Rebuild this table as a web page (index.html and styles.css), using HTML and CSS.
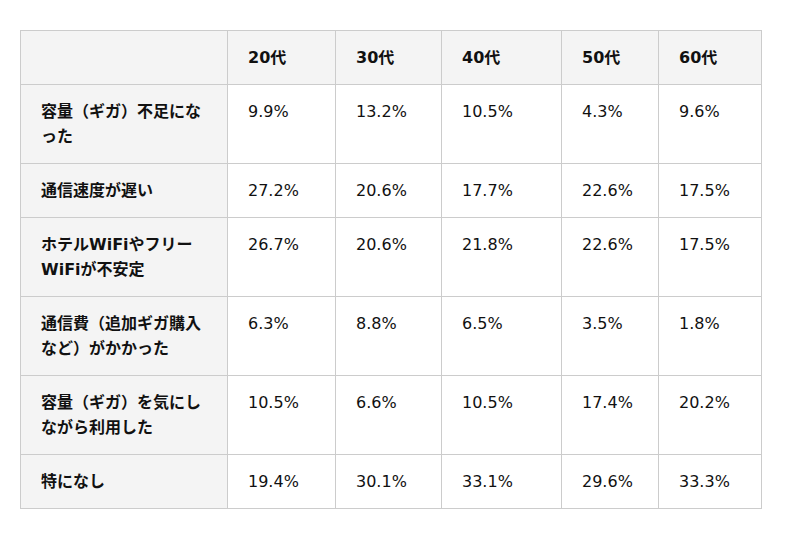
FILE: index.html
```html
<!DOCTYPE html>
<html lang="ja">
<head>
<meta charset="utf-8">
<link rel="stylesheet" href="styles.css">
</head>
<body>
<table class="survey">
<colgroup>
<col class="c-label"><col class="c1"><col class="c2"><col class="c3"><col class="c4"><col class="c5">
</colgroup>
<thead>
<tr><th></th><th>20代</th><th>30代</th><th>40代</th><th>50代</th><th>60代</th></tr>
</thead>
<tbody>
<tr><th>容量（ギガ）不足になった</th><td>9.9%</td><td>13.2%</td><td>10.5%</td><td>4.3%</td><td>9.6%</td></tr>
<tr><th>通信速度が遅い</th><td>27.2%</td><td>20.6%</td><td>17.7%</td><td>22.6%</td><td>17.5%</td></tr>
<tr><th>ホテルWiFiやフリーWiFiが不安定</th><td>26.7%</td><td>20.6%</td><td>21.8%</td><td>22.6%</td><td>17.5%</td></tr>
<tr><th>通信費（追加ギガ購入など）がかかった</th><td>6.3%</td><td>8.8%</td><td>6.5%</td><td>3.5%</td><td>1.8%</td></tr>
<tr><th>容量（ギガ）を気にしながら利用した</th><td>10.5%</td><td>6.6%</td><td>10.5%</td><td>17.4%</td><td>20.2%</td></tr>
<tr><th>特になし</th><td>19.4%</td><td>30.1%</td><td>33.1%</td><td>29.6%</td><td>33.3%</td></tr>
</tbody>
</table>
</body>
</html>
```

FILE: styles.css
```css
html, body {
  margin: 0;
  background: #fff;
}
body {
  padding: 30px 20px;
  font-family: "DejaVu Sans", "Noto Sans CJK JP", sans-serif;
  font-size: 16px;
  line-height: 25px;
  color: #111;
}
.survey {
  border-collapse: collapse;
  table-layout: fixed;
  width: 741px;
}
.c-label { width: 207px; }
.c1 { width: 108px; }
.c2 { width: 106px; }
.c3 { width: 120px; }
.c4 { width: 97px; }
.c5 { width: 103px; }
.survey th,
.survey td {
  border: 1px solid #cccccc;
  padding: 14px 20px 14px 20px;
  text-align: left;
  vertical-align: top;
}
.survey th {
  font-weight: bold;
  background: #f4f4f4;
}
.survey td {
  background: #fff;
  font-weight: normal;
}
```
